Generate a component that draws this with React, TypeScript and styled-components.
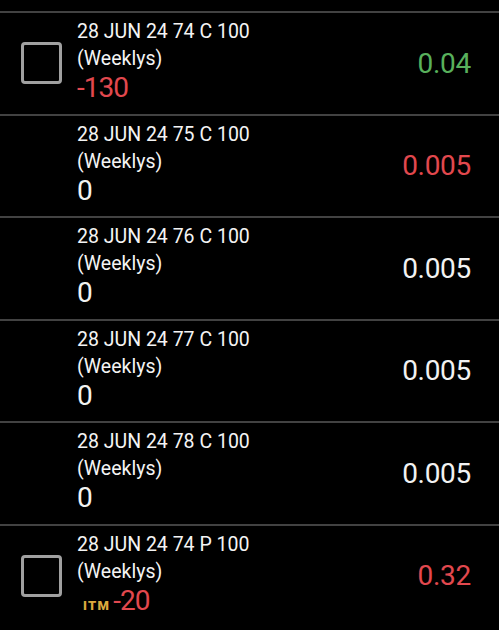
import React from 'react'
import styled, { createGlobalStyle } from 'styled-components'

const GlobalStyle = createGlobalStyle`
  html, body {
    margin: 0;
    padding: 0;
    background: #000;
  }
  body {
    font-family: Roboto, "Liberation Sans", sans-serif;
    color: #f2f2f2;
  }
`

type Tone = 'up' | 'down' | 'flat'

type Leg = {
  title: string
  qty: string
  qtyTone: Tone
  price: string
  priceTone: Tone
  checkbox?: boolean
  itm?: boolean
}

const legs: Leg[] = [
  { title: '28 JUN 24 74 C 100', qty: '-130', qtyTone: 'down', price: '0.04', priceTone: 'up', checkbox: true },
  { title: '28 JUN 24 75 C 100', qty: '0', qtyTone: 'flat', price: '0.005', priceTone: 'down' },
  { title: '28 JUN 24 76 C 100', qty: '0', qtyTone: 'flat', price: '0.005', priceTone: 'flat' },
  { title: '28 JUN 24 77 C 100', qty: '0', qtyTone: 'flat', price: '0.005', priceTone: 'flat' },
  { title: '28 JUN 24 78 C 100', qty: '0', qtyTone: 'flat', price: '0.005', priceTone: 'flat' },
  { title: '28 JUN 24 74 P 100', qty: '-20', qtyTone: 'down', price: '0.32', priceTone: 'down', checkbox: true, itm: true },
]

const toneColor = (t: Tone) => (t === 'up' ? '#58b05c' : t === 'down' ? '#e2484e' : '#f2f2f2')

const App = () => {
  return (
    <>
      <GlobalStyle />
      <List>
        <TopGap />
        {legs.map((leg, i) => (
          <Row key={i}>
            <CheckSlot>{leg.checkbox && <Check />}</CheckSlot>
            <Info>
              <Title>{leg.title}</Title>
              <Title>(Weeklys)</Title>
              <QtyLine>
                {leg.itm && <Itm>ITM</Itm>}
                <Qty $tone={leg.qtyTone}>{leg.qty}</Qty>
              </QtyLine>
            </Info>
            <Price $tone={leg.priceTone}>{leg.price}</Price>
          </Row>
        ))}
      </List>
    </>
  )
}

export default App

const List = styled.div`
  width: 499px;
  height: 630px;
  overflow: hidden;
  background: #000;
`

const TopGap = styled.div`
  height: 11px;
`

const Row = styled.div`
  height: 100.5px;
  border-top: 2px solid #424242;
  display: flex;
  align-items: center;
`

const CheckSlot = styled.div`
  width: 41px;
  margin-left: 21px;
  margin-right: 15px;
  display: flex;
  align-items: center;
  justify-content: center;
`

const Check = styled.div`
  width: 41px;
  height: 42px;
  box-sizing: border-box;
  border: 3.5px solid #a0a0a0;
  border-radius: 4px;
`

const Info = styled.div`
  flex: 1;
  align-self: flex-start;
  padding-top: 5px;
  display: flex;
  flex-direction: column;
`

const Title = styled.div`
  font-size: 19.5px;
  line-height: 27px;
  color: #f4f4f4;
  white-space: nowrap;
`

const QtyLine = styled.div`
  display: flex;
  align-items: baseline;
  height: 32px;
`

const Itm = styled.span`
  font-size: 13px;
  font-weight: 900;
  letter-spacing: 1.3px;
  color: #dcaa3e;
  margin-left: 6px;
  margin-right: 3px;
`

const Qty = styled.span<{ $tone: Tone }>`
  font-size: 28px;
  line-height: 32px;
  letter-spacing: -1px;
  color: ${p => toneColor(p.$tone)};
`

const Price = styled.div<{ $tone: Tone }>`
  font-size: 28px;
  letter-spacing: -0.3px;
  margin-right: 28px;
  color: ${p => toneColor(p.$tone)};
`
